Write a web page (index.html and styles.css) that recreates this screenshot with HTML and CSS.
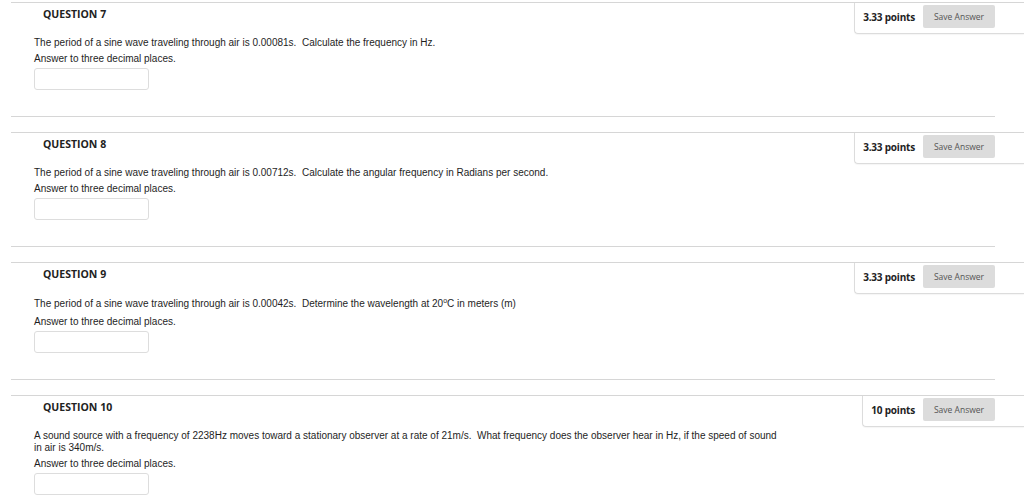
FILE: index.html
```html
<!DOCTYPE html>
<html>
<head>
<meta charset="utf-8">
<link rel="stylesheet" href="styles.css">
</head>
<body>
<div class="question">
  <div class="q-head">
    <h3 class="q-title">QUESTION 7</h3>
    <div class="q-points"><span class="pts">3.33 points</span><button class="save">Save Answer</button></div>
  </div>
  <div class="q-body">
    <p>The period of a sine wave traveling through air is 0.00081s.&nbsp; Calculate the frequency in Hz.</p>
    <p class="last">Answer to three decimal places.</p>
    <input class="answer" type="text">
  </div>
</div>
<div class="question">
  <div class="q-head">
    <h3 class="q-title">QUESTION 8</h3>
    <div class="q-points"><span class="pts">3.33 points</span><button class="save">Save Answer</button></div>
  </div>
  <div class="q-body">
    <p>The period of a sine wave traveling through air is 0.00712s.&nbsp; Calculate the angular frequency in Radians per second.</p>
    <p class="last">Answer to three decimal places.</p>
    <input class="answer" type="text">
  </div>
</div>
<div class="question">
  <div class="q-head">
    <h3 class="q-title">QUESTION 9</h3>
    <div class="q-points"><span class="pts">3.33 points</span><button class="save">Save Answer</button></div>
  </div>
  <div class="q-body">
    <p class="has-sup">The period of a sine wave traveling through air is 0.00042s.&nbsp; Determine the wavelength at 20<sup>o</sup>C in meters (m)</p>
    <p class="last">Answer to three decimal places.</p>
    <input class="answer" type="text">
  </div>
</div>
<div class="question">
  <div class="q-head">
    <h3 class="q-title">QUESTION 10</h3>
    <div class="q-points"><span class="pts">10 points</span><button class="save">Save Answer</button></div>
  </div>
  <div class="q-body">
    <p>A sound source with a frequency of 2238Hz moves toward a stationary observer at a rate of 21m/s.&nbsp; What frequency does the observer hear in Hz, if the speed of sound in air is 340m/s.</p>
    <p class="last">Answer to three decimal places.</p>
    <input class="answer" type="text">
  </div>
</div>
</body>
</html>
```
FILE: styles.css
```css
html, body {
  margin: 0;
  background: #fff;
}
body {
  padding-top: 2px;
  font-family: "Liberation Sans", Arial, sans-serif;
  color: #1e1e1e;
}
.question {
  margin-left: 11px;
  margin-bottom: 15px;
  border-top: 1px solid #d6d6d6;
}
.q-head {
  display: flex;
  align-items: flex-start;
}
.q-title {
  flex: 1;
  margin: 0;
  padding: 4px 0 0 32px;
  font-family: "Open Sans", sans-serif;
  font-weight: 700;
  font-size: 10.5px;
  line-height: 14px;
  color: #222;
}
.q-points {
  display: flex;
  align-items: center;
  gap: 8px;
  height: 23px;
  padding: 2px 29px 5px 8px;
  border-left: 1px solid #dcdcdc;
  border-bottom: 1px solid #dcdcdc;
  border-bottom-left-radius: 4px;
  box-shadow: 0 1px 1px rgba(0, 0, 0, 0.04);
}
.pts {
  font-family: "Open Sans", sans-serif;
  font-weight: 700;
  font-size: 10px;
  letter-spacing: -0.2px;
  color: #222;
}
.save {
  width: 72px;
  height: 23px;
  padding: 0;
  border: none;
  border-radius: 2px;
  background: #dcdcdc;
  font-family: "Open Sans", sans-serif;
  font-size: 8.5px;
  color: #555;
}
.q-body {
  margin-right: 29px;
  padding: 3px 0 26px 23px;
  border-bottom: 1px solid #d6d6d6;
}
.q-body p {
  margin: 0 0 4px;
  max-width: 750px;
  font-size: 10px;
  line-height: 12px;
}
.q-body p.last {
  margin-bottom: 3px;
}
.q-body p.has-sup {
  padding: 1px 0 2px;
}
.q-body sup {
  font-size: 7px;
  line-height: 0;
}
.answer {
  display: block;
  box-sizing: border-box;
  width: 115px;
  height: 22px;
  margin: 0;
  padding: 0 4px;
  border: 1px solid #dddddd;
  border-radius: 3px;
  background: #fff;
}
```
